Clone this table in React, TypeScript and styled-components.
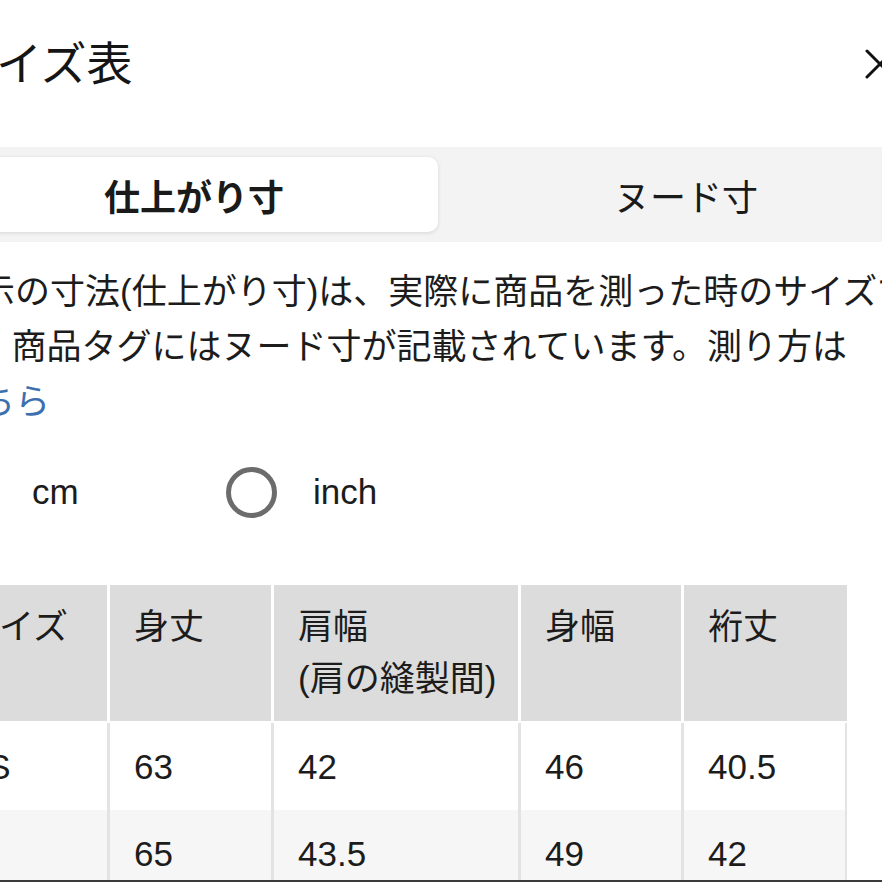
import React from "react";
import styled, { createGlobalStyle } from "styled-components";

const Global = createGlobalStyle`
  html, body {
    margin: 0;
    padding: 0;
    background: #ffffff;
    overflow: hidden;
  }
  body {
    font-family: "Liberation Sans", "Noto Sans CJK JP", sans-serif;
    color: #1c1c1c;
  }
`;

const Page = styled.div`
  width: 1000px;
  margin-left: -60px;
  display: flex;
  flex-direction: column;
`;

const Header = styled.header`
  display: flex;
  align-items: center;
  justify-content: space-between;
  height: 60px;
  margin-top: 34px;
  padding: 0 45px 0 10px;
`;

const Title = styled.h1`
  margin: 0;
  font-size: 46px;
  font-weight: 400;
  line-height: 60px;
  color: #151515;
`;

const CloseButton = styled.button`
  width: 30px;
  height: 30px;
  padding: 0;
  border: 0;
  background: none;
  display: flex;
  align-items: center;
  justify-content: center;
`;

const TabBar = styled.div`
  margin-top: 53px;
  height: 95px;
  box-sizing: border-box;
  padding: 10px;
  background: #f3f3f3;
  border-radius: 12px;
  display: grid;
  grid-template-columns: 1fr 1fr;
  gap: 4px;
`;

const Tab = styled.button<{ $active?: boolean }>`
  height: 75px;
  padding: 0;
  border: 0;
  border-radius: 10px;
  font-family: inherit;
  font-size: 36px;
  color: #1a1a1a;
  font-weight: ${(p) => (p.$active ? 700 : 400)};
  background: ${(p) => (p.$active ? "#ffffff" : "transparent")};
  box-shadow: ${(p) => (p.$active ? "0 1px 4px rgba(0,0,0,0.12)" : "none")};
`;

const Note = styled.p`
  margin: 21.5px 0 0 5px;
  font-size: 35px;
  line-height: 55px;
  white-space: nowrap;
  color: #1c1c1c;
`;

const Link = styled.a`
  color: #3d6fae;
  text-decoration: none;
`;

const Units = styled.div`
  display: flex;
  align-items: center;
  height: 51px;
  margin-top: 38px;
  padding-left: 5px;
`;

const UnitOption = styled.label`
  display: flex;
  align-items: center;
  gap: 36px;
  width: 281px;
  font-size: 35px;
  color: #1c1c1c;
`;

const RadioCircle = styled.span<{ $checked?: boolean }>`
  width: 51px;
  height: 51px;
  box-sizing: border-box;
  border-radius: 50%;
  border: 5px solid #6c6c6c;
  display: flex;
  align-items: center;
  justify-content: center;
  flex: none;
  &::after {
    content: "";
    width: 23px;
    height: 23px;
    border-radius: 50%;
    background: #333;
    display: ${(p) => (p.$checked ? "block" : "none")};
  }
`;

const Table = styled.div`
  margin-top: 67.5px;
  display: flex;
  flex-direction: column;
  align-items: flex-start;
`;

const Row = styled.div<{ $head?: boolean }>`
  display: grid;
  grid-template-columns: 167px 161px 244px 160px 163px;
  column-gap: 3px;
  background: ${(p) => (p.$head ? "#ffffff" : "#e3e3e3")};
  margin-bottom: ${(p) => (p.$head ? "2px" : "0")};
`;

const Cell = styled.div<{ $head?: boolean; $shade?: boolean; $last?: boolean }>`
  box-sizing: border-box;
  padding: ${(p) => (p.$head ? "16px 24px" : "17.5px 24px")};
  font-size: 35px;
  line-height: 52px;
  white-space: nowrap;
  color: #1c1c1c;
  background: ${(p) => (p.$head ? "#dcdcdc" : p.$shade ? "#f6f6f6" : "#ffffff")};
  min-height: ${(p) => (p.$head ? "136px" : "87px")};
  box-shadow: ${(p) => (p.$last && !p.$head ? "inset -2px 0 0 #e3e3e3" : "none")};
`;

const BottomEdge = styled.div`
  position: fixed;
  left: 0;
  right: 0;
  bottom: 0;
  height: 2px;
  background: #3a3a3a;
`;

const headers = ["サイズ", "身丈", "肩幅\n(肩の縫製間)", "身幅", "裄丈"];
const rows = [
  ["XS", "63", "42", "46", "40.5"],
  ["S", "65", "43.5", "49", "42"],
];

export default function App() {
  return (
    <>
      <Global />
      <Page>
        <Header>
          <Title>サイズ表</Title>
          <CloseButton aria-label="閉じる">
            <svg width="30" height="30" viewBox="0 0 30 30">
              <path d="M2 2 L28 28 M28 2 L2 28" stroke="#111" strokeWidth="3" strokeLinecap="round" />
            </svg>
          </CloseButton>
        </Header>

        <TabBar>
          <Tab $active>仕上がり寸</Tab>
          <Tab>ヌード寸</Tab>
        </TabBar>

        <Note>
          表示の寸法(仕上がり寸)は、実際に商品を測った時のサイズで
          <br />
          す。商品タグにはヌード寸が記載されています。測り方は
          <br />
          <Link href="#">こちら</Link>
        </Note>

        <Units>
          <UnitOption>
            <RadioCircle $checked />
            cm
          </UnitOption>
          <UnitOption>
            <RadioCircle />
            inch
          </UnitOption>
        </Units>

        <Table>
          <Row $head>
            {headers.map((h, i) => (
              <Cell key={i} $head>
                {h.split("\n").map((line, j) => (
                  <div key={j}>{line}</div>
                ))}
              </Cell>
            ))}
          </Row>
          {rows.map((r, ri) => (
            <Row key={ri}>
              {r.map((v, ci) => (
                <Cell key={ci} $shade={ri % 2 === 1} $last={ci === r.length - 1}>
                  {v}
                </Cell>
              ))}
            </Row>
          ))}
        </Table>
      </Page>
      <BottomEdge />
    </>
  );
}
